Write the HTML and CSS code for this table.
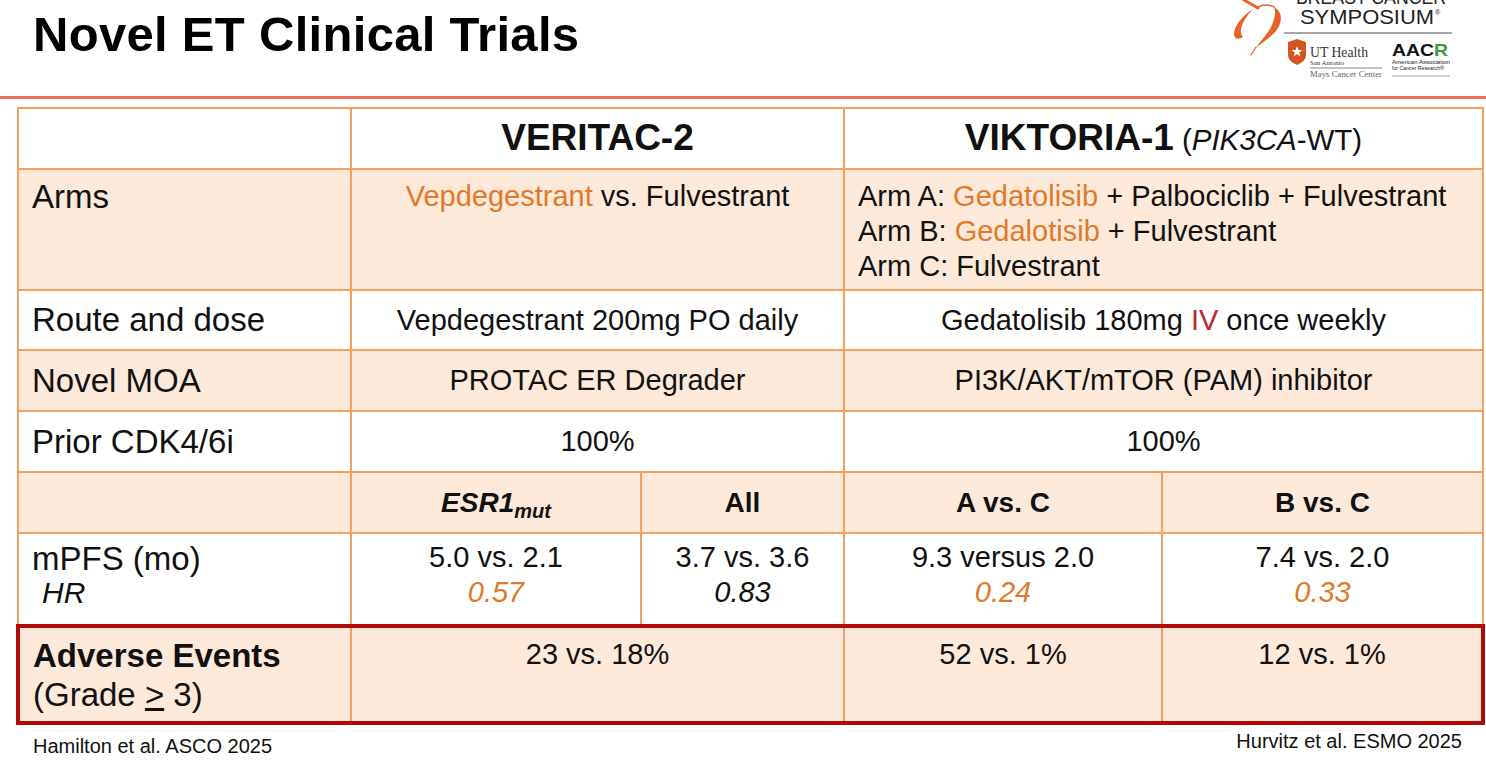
FILE: index.html
```html
<!DOCTYPE html>
<html>
<head>
<meta charset="utf-8">
<link rel="stylesheet" href="styles.css">
</head>
<body>
<div class="slide">
  <header class="header">
    <h1 class="title">Novel ET Clinical Trials</h1>
    <svg class="logo" width="261" height="92" viewBox="0 0 261 92" xmlns="http://www.w3.org/2000/svg">
      <path d="M19,0 L33,8" fill="none" stroke="#E8612A" stroke-width="3" stroke-linecap="round"/>
      <path d="M33,7 Q41,3 49,7" fill="none" stroke="#E8612A" stroke-width="1.6" stroke-linecap="round"/>
      <path d="M28,9 C18,15 9,26 9,34 C9,39 14,40 18,37 C15,34 15,28 19,21 C22,16 25,12 28,9 Z" fill="#E8612A"/>
      <path d="M49,7 C60,13 57,27 46,36 C40,41 35,44 31,48 C35,41 42,35 46,27 C50,19 51,12 49,7 Z" fill="#E8612A"/>
      <path d="M31,47 L26,55" fill="none" stroke="#E8612A" stroke-width="1.2" stroke-linecap="round"/>
      <text x="71" y="4" class="lg-sans" font-size="20" textLength="150" lengthAdjust="spacingAndGlyphs">BREAST CANCER</text>
      <text x="75" y="24" class="lg-sans" font-size="21" textLength="134" lengthAdjust="spacingAndGlyphs">SYMPOSIUM</text>
      <text x="210" y="15" class="lg-sans" font-size="7">®</text>
      <line x1="59" y1="33" x2="227" y2="33" stroke="#8a8a8a" stroke-width="1.5"/>
      <path d="M63,42 L72,39 L81,42 L81,55 Q81,61 72,65 Q63,61 63,55 Z" fill="#D2561E"/>
      <path d="M72,46 L73.4,50 L77.5,50 L74.2,52.5 L75.4,56.5 L72,54 L68.6,56.5 L69.8,52.5 L66.5,50 L70.6,50 Z" fill="#fff"/>
      <text x="85" y="57" class="lg-serif" font-size="15" textLength="58" lengthAdjust="spacingAndGlyphs">UT Health</text>
      <text x="85" y="65" class="lg-serif" font-size="6.5" textLength="34" lengthAdjust="spacingAndGlyphs">San Antonio</text>
      <line x1="85" y1="68" x2="157" y2="68" stroke="#555" stroke-width="0.7"/>
      <text x="85" y="77" class="lg-serif lg-grey" font-size="8.5" textLength="72" lengthAdjust="spacingAndGlyphs">Mays Cancer Center</text>
      <text x="167" y="56" class="lg-sans lg-bold" font-size="17" textLength="56" lengthAdjust="spacingAndGlyphs">AAC<tspan class="lg-green">R</tspan></text>
      <text x="167" y="64" class="lg-sans" font-size="5.5" textLength="58" lengthAdjust="spacingAndGlyphs">American Association</text>
      <text x="167" y="70" class="lg-sans" font-size="5.5" textLength="52" lengthAdjust="spacingAndGlyphs">for Cancer Research®</text>
      <line x1="167" y1="76" x2="225" y2="76" stroke="#777" stroke-width="0.7"/>
    </svg>
  </header>
  <div class="rule"></div>

  <div class="table-wrap">
    <table class="grid">
      <colgroup>
        <col class="c-label">
        <col class="c-v1">
        <col class="c-v2">
        <col class="c-k1">
        <col class="c-k2">
      </colgroup>
      <tr class="r-head">
        <td></td>
        <td colspan="2" class="center"><span class="trial">VERITAC-2</span></td>
        <td colspan="2" class="center"><span class="trial">VIKTORIA-1</span> <span class="trial-sub">(<i>PIK3CA</i>-WT)</span></td>
      </tr>
      <tr class="r-arms shade top">
        <td class="label">Arms</td>
        <td colspan="2" class="center"><span class="hl">Vepdegestrant</span> vs. Fulvestrant</td>
        <td colspan="2" class="left-val">Arm A: <span class="hl">Gedatolisib</span> + Palbociclib + Fulvestrant<br>Arm B: <span class="hl">Gedalotisib</span> + Fulvestrant<br>Arm C: Fulvestrant</td>
      </tr>
      <tr class="r-60 mid">
        <td class="label">Route and dose</td>
        <td colspan="2" class="center">Vepdegestrant 200mg PO daily</td>
        <td colspan="2" class="center">Gedatolisib 180mg <span class="red">IV</span> once weekly</td>
      </tr>
      <tr class="r-61 shade mid">
        <td class="label">Novel MOA</td>
        <td colspan="2" class="center">PROTAC ER Degrader</td>
        <td colspan="2" class="center">PI3K/AKT/mTOR (PAM) inhibitor</td>
      </tr>
      <tr class="r-61 mid">
        <td class="label">Prior CDK4/6i</td>
        <td colspan="2" class="center">100%</td>
        <td colspan="2" class="center">100%</td>
      </tr>
      <tr class="r-61 shade mid sub">
        <td></td>
        <td class="center"><b><i>ESR1<sub>mut</sub></i></b></td>
        <td class="center"><b>All</b></td>
        <td class="center"><b>A vs. C</b></td>
        <td class="center"><b>B vs. C</b></td>
      </tr>
      <tr class="r-pfs top">
        <td class="label pfs-label">mPFS (mo)<br><span class="hr"><i>HR</i></span></td>
        <td class="center">5.0 vs. 2.1<br><i class="hl">0.57</i></td>
        <td class="center">3.7 vs. 3.6<br><i>0.83</i></td>
        <td class="center">9.3 versus 2.0<br><i class="hl">0.24</i></td>
        <td class="center">7.4 vs. 2.0<br><i class="hl">0.33</i></td>
      </tr>
      <tr class="r-ae shade top ae">
        <td class="label ae-label"><b>Adverse Events</b><br>(Grade <u>&gt;</u> 3)</td>
        <td colspan="2" class="center">23 vs. 18%</td>
        <td class="center">52 vs. 1%</td>
        <td class="center">12 vs. 1%</td>
      </tr>
    </table>
  </div>

  <footer class="footer">
    <span class="ref ref-left">Hamilton et al. ASCO 2025</span>
    <span class="ref ref-right">Hurvitz et al. ESMO 2025</span>
  </footer>
</div>
</body>
</html>
```

FILE: styles.css
```css
* { box-sizing: border-box; }

html, body {
  margin: 0;
  padding: 0;
  background: #ffffff;
}

body {
  font-family: "Liberation Sans", Arial, sans-serif;
  color: #111111;
  width: 1486px;
  height: 763px;
  overflow: hidden;
}

.slide {
  width: 1486px;
  height: 763px;
  display: flex;
  flex-direction: column;
}

.header {
  height: 96px;
  display: flex;
  justify-content: space-between;
  align-items: flex-start;
}

.title {
  margin: 10px 0 0 33px;
  font-size: 49px;
  line-height: 49px;
  font-weight: bold;
  color: #000;
  letter-spacing: 0.3px;
}

.logo {
  display: block;
}

.lg-sans { font-family: "Liberation Sans", Arial, sans-serif; fill: #222; }
.lg-serif { font-family: "Liberation Serif", "Times New Roman", serif; fill: #333; }
.lg-grey { fill: #666; }
.lg-bold { font-weight: bold; fill: #111; }
.lg-green { fill: #3f9a3a; }

.rule {
  height: 3px;
  background: #E8735A;
}

.table-wrap {
  padding: 8px 0 0 16px;
}

.grid {
  width: 1465px;
  border-collapse: collapse;
  table-layout: fixed;
}

.c-label { width: 333px; }
.c-v1 { width: 290px; }
.c-v2 { width: 203px; }
.c-k1 { width: 318px; }
.c-k2 { width: 321px; }

.grid td {
  border: 2px solid #F3A160;
  font-size: 29px;
  line-height: 35px;
  padding: 0 13px;
  background: #ffffff;
  color: #111;
}

.grid tr.shade td { background: #FDE9DA; }

.grid tr.top td { vertical-align: top; padding-top: 9px; }
.grid tr.mid td { vertical-align: middle; }

.r-head { height: 61px; }
.r-head td { vertical-align: middle; }
.r-arms { height: 121px; }
.r-60 { height: 60px; }
.r-61 { height: 61px; }
.r-pfs { height: 93px; }
.r-ae { height: 97px; }

.center { text-align: center; }
.left-val { text-align: left; }

.grid td.label {
  font-size: 33px;
  line-height: 38px;
  padding-left: 13px;
}

.grid tr.top td.label { padding-top: 8px; }

.grid tr.r-pfs td { padding-top: 6px; }
.grid td.pfs-label {
  line-height: 33px;
  padding-top: 8px;
}

.hr {
  display: inline-block;
  padding-left: 10px;
  font-size: 30px;
}

.trial {
  font-size: 37px;
  font-weight: bold;
}

.trial-sub {
  font-size: 29.5px;
}

.hl { color: #E07A2B; }
.red { color: #C0282D; }

.sub td { font-size: 28px; }
.sub sub {
  font-size: 20px;
  vertical-align: -6px;
  line-height: 0;
}

.grid tr.ae td {
  border-top: 4px solid #B20A0A;
  border-bottom: 4px solid #B20A0A;
}
.grid tr.ae td:first-child { border-left: 4px solid #B20A0A; }
.grid tr.ae td:last-child { border-right: 4px solid #B20A0A; }

.grid td.ae-label {
  line-height: 39px;
}

.footer {
  display: flex;
  justify-content: space-between;
  align-items: flex-start;
  padding: 0 24px 0 33px;
}

.ref {
  font-size: 20px;
  line-height: 24px;
  color: #111;
}

.ref-left { margin-top: 9px; }
.ref-right { margin-top: 4px; }
```
